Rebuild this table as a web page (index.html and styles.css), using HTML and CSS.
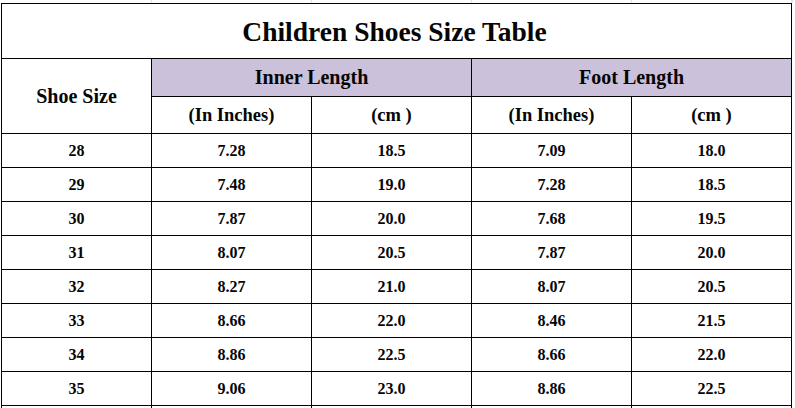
FILE: index.html
```html
<!DOCTYPE html>
<html>
<head>
<meta charset="utf-8">
<link rel="stylesheet" href="styles.css">
</head>
<body>
<div class="page">
  <div class="strip">
    <div></div><div></div><div></div><div></div><div></div>
  </div>
  <div class="table">
    <div class="cell title">Children Shoes Size Table</div>
    <div class="cell head shoe">Shoe Size</div>
    <div class="cell head group inner">Inner Length</div>
    <div class="cell head group foot">Foot Length</div>
    <div class="cell sub">(In Inches)</div>
    <div class="cell sub">(cm )</div>
    <div class="cell sub">(In Inches)</div>
    <div class="cell sub">(cm )</div>

    <div class="cell">28</div><div class="cell">7.28</div><div class="cell">18.5</div><div class="cell">7.09</div><div class="cell">18.0</div>
    <div class="cell">29</div><div class="cell">7.48</div><div class="cell">19.0</div><div class="cell">7.28</div><div class="cell">18.5</div>
    <div class="cell">30</div><div class="cell">7.87</div><div class="cell">20.0</div><div class="cell">7.68</div><div class="cell">19.5</div>
    <div class="cell">31</div><div class="cell">8.07</div><div class="cell">20.5</div><div class="cell">7.87</div><div class="cell">20.0</div>
    <div class="cell">32</div><div class="cell">8.27</div><div class="cell">21.0</div><div class="cell">8.07</div><div class="cell">20.5</div>
    <div class="cell">33</div><div class="cell">8.66</div><div class="cell">22.0</div><div class="cell">8.46</div><div class="cell">21.5</div>
    <div class="cell">34</div><div class="cell">8.86</div><div class="cell">22.5</div><div class="cell">8.66</div><div class="cell">22.0</div>
    <div class="cell">35</div><div class="cell">9.06</div><div class="cell">23.0</div><div class="cell">8.86</div><div class="cell">22.5</div>
    <div class="cell"></div><div class="cell"></div><div class="cell"></div><div class="cell"></div><div class="cell"></div>
  </div>
</div>
</body>
</html>
```

FILE: styles.css
```css
html, body {
  margin: 0;
  padding: 0;
  background: #fff;
  overflow: hidden;
  height: 408px;
}

.page {
  width: 795px;
  height: 408px;
  overflow: hidden;
  font-family: "Liberation Serif", "Times New Roman", serif;
  font-weight: bold;
  color: #050505;
}

.strip {
  display: grid;
  grid-template-columns: 150px 159px 159px 159px 159px;
  column-gap: 1px;
  height: 3px;
  width: 792px;
  margin-left: 1px;
  background: #e2e2e2;
}

.strip div {
  background: #fff;
}

.table {
  display: grid;
  grid-template-columns: 149px 159px 159px 159px 159px;
  grid-template-rows: 54px 37px 36px repeat(9, 33px);
  gap: 1px;
  width: 789px;
  margin-left: 1px;
  border: 1px solid #000;
  border-bottom: none;
  background: #000;
}

.cell {
  background: #fff;
  display: flex;
  align-items: center;
  justify-content: center;
  font-size: 16px;
  white-space: nowrap;
}

.title {
  grid-column: 1 / 6;
  font-size: 27.5px;
  padding-top: 2px;
  padding-right: 4px;
}

.head {
  font-size: 20px;
}

.shoe {
  grid-row: 2 / 4;
}

.group {
  background: #ccc1da;
}

.inner {
  grid-column: 2 / 4;
}

.foot {
  grid-column: 4 / 6;
}

.sub {
  font-size: 18.5px;
}
```
